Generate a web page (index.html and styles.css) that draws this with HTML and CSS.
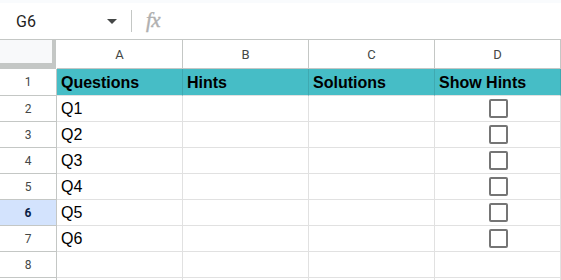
FILE: index.html
```html
<!DOCTYPE html>
<html>
<head>
<meta charset="utf-8">
<link rel="stylesheet" href="styles.css">
</head>
<body>
<div class="topstrip"></div>
<div class="fbar">
  <div class="namebox">G6</div>
  <svg class="caret" width="10" height="5" viewBox="0 0 10 5"><path d="M0 0 L10 0 L5 5 Z" fill="#444746"/></svg>
  <div class="sep"></div>
  <div class="fx">fx</div>
</div>
<div class="sheet">
  <div class="corner"><div class="cornerbox"></div></div>
  <div class="ch">A</div>
  <div class="ch">B</div>
  <div class="ch">C</div>
  <div class="ch">D</div>

  <div class="rh">1</div>
  <div class="c hd">Questions</div>
  <div class="c hd">Hints</div>
  <div class="c hd">Solutions</div>
  <div class="c hd">Show Hints</div>

  <div class="rh">2</div>
  <div class="c">Q1</div><div class="c"></div><div class="c"></div><div class="c cb"><span class="box"></span></div>
  <div class="rh">3</div>
  <div class="c">Q2</div><div class="c"></div><div class="c"></div><div class="c cb"><span class="box"></span></div>
  <div class="rh">4</div>
  <div class="c">Q3</div><div class="c"></div><div class="c"></div><div class="c cb"><span class="box"></span></div>
  <div class="rh">5</div>
  <div class="c">Q4</div><div class="c"></div><div class="c"></div><div class="c cb"><span class="box"></span></div>
  <div class="rh sel">6</div>
  <div class="c">Q5</div><div class="c"></div><div class="c"></div><div class="c cb"><span class="box"></span></div>
  <div class="rh">7</div>
  <div class="c">Q6</div><div class="c"></div><div class="c"></div><div class="c cb"><span class="box"></span></div>
  <div class="rh">8</div>
  <div class="c"></div><div class="c"></div><div class="c"></div><div class="c"></div>
  <div class="rh last"></div>
  <div class="c last"></div><div class="c last"></div><div class="c last"></div><div class="c last"></div>
</div>
</body>
</html>
```

FILE: styles.css
```css
html, body {
  margin: 0;
  padding: 0;
  background: #ffffff;
  overflow: hidden;
  width: 561px;
  height: 280px;
}
body {
  font-family: "Liberation Sans", Arial, sans-serif;
}
.topstrip {
  height: 3px;
  background: #f9fbfd;
}
.fbar {
  height: 36px;
  border-bottom: 1px solid #c4c7c5;
  display: flex;
  align-items: center;
  box-sizing: content-box;
}
.namebox {
  font-family: Roboto, "Liberation Sans", sans-serif;
  font-size: 16px;
  color: #1f1f1f;
  margin-left: 16px;
  width: 91px;
}
.caret {
  display: block;
  margin-top: 1px;
}
.sep {
  width: 1px;
  height: 22px;
  background: #c4c7c5;
  margin-left: 14px;
}
.fx {
  font-family: "Liberation Serif", serif;
  font-style: italic;
  font-size: 21px;
  color: #b0b0b0;
  margin-left: 14px;
  letter-spacing: -0.5px;
  margin-top: -2px;
  -webkit-text-stroke: 0.4px #b0b0b0;
}
.sheet {
  display: grid;
  grid-template-columns: 57px repeat(4, 126px);
  grid-template-rows: 29px 27px repeat(7, 26px) 3px;
}
.sheet > div {
  box-sizing: border-box;
}
.corner {
  padding-right: 1px;
}
.cornerbox {
  height: 29px;
  background: #f8f9fa;
  border-right: 4px solid #c4c7c5;
  border-bottom: 6px solid #c4c7c5;
  box-sizing: border-box;
}
.ch {
  border-right: 1px solid #c4c7c5;
  border-bottom: 1px solid #c4c7c5;
  display: flex;
  align-items: center;
  justify-content: center;
  font-family: Roboto, "Liberation Sans", sans-serif;
  font-size: 13px;
  color: #444746;
  padding-top: 1px;
}
.rh {
  border-right: 1px solid #c4c7c5;
  border-bottom: 1px solid #c4c7c5;
  display: flex;
  align-items: center;
  justify-content: center;
  font-family: Roboto, "Liberation Sans", sans-serif;
  font-size: 12px;
  color: #444746;
}
.rh.sel {
  background: #d3e3fd;
  color: #0b1f47;
  font-weight: bold;
}
.c {
  border-right: 1px solid #e1e1e1;
  border-bottom: 1px solid #e1e1e1;
  display: flex;
  align-items: center;
  padding-left: 4px;
  font-size: 16px;
  color: #000000;
  padding-top: 1px;
}
.last {
  border-bottom: none;
}
.c.hd {
  background: #46bdc6;
  font-weight: bold;
  border-right-color: #3fa9b1;
  border-bottom-color: #e1e1e1;
}
.c.cb {
  justify-content: center;
  padding-left: 0;
  padding-top: 0;
}
.box {
  display: block;
  width: 19px;
  height: 19px;
  box-sizing: border-box;
  border: 2px solid #757575;
  border-radius: 2px;
  margin-left: 1px;
}
```
